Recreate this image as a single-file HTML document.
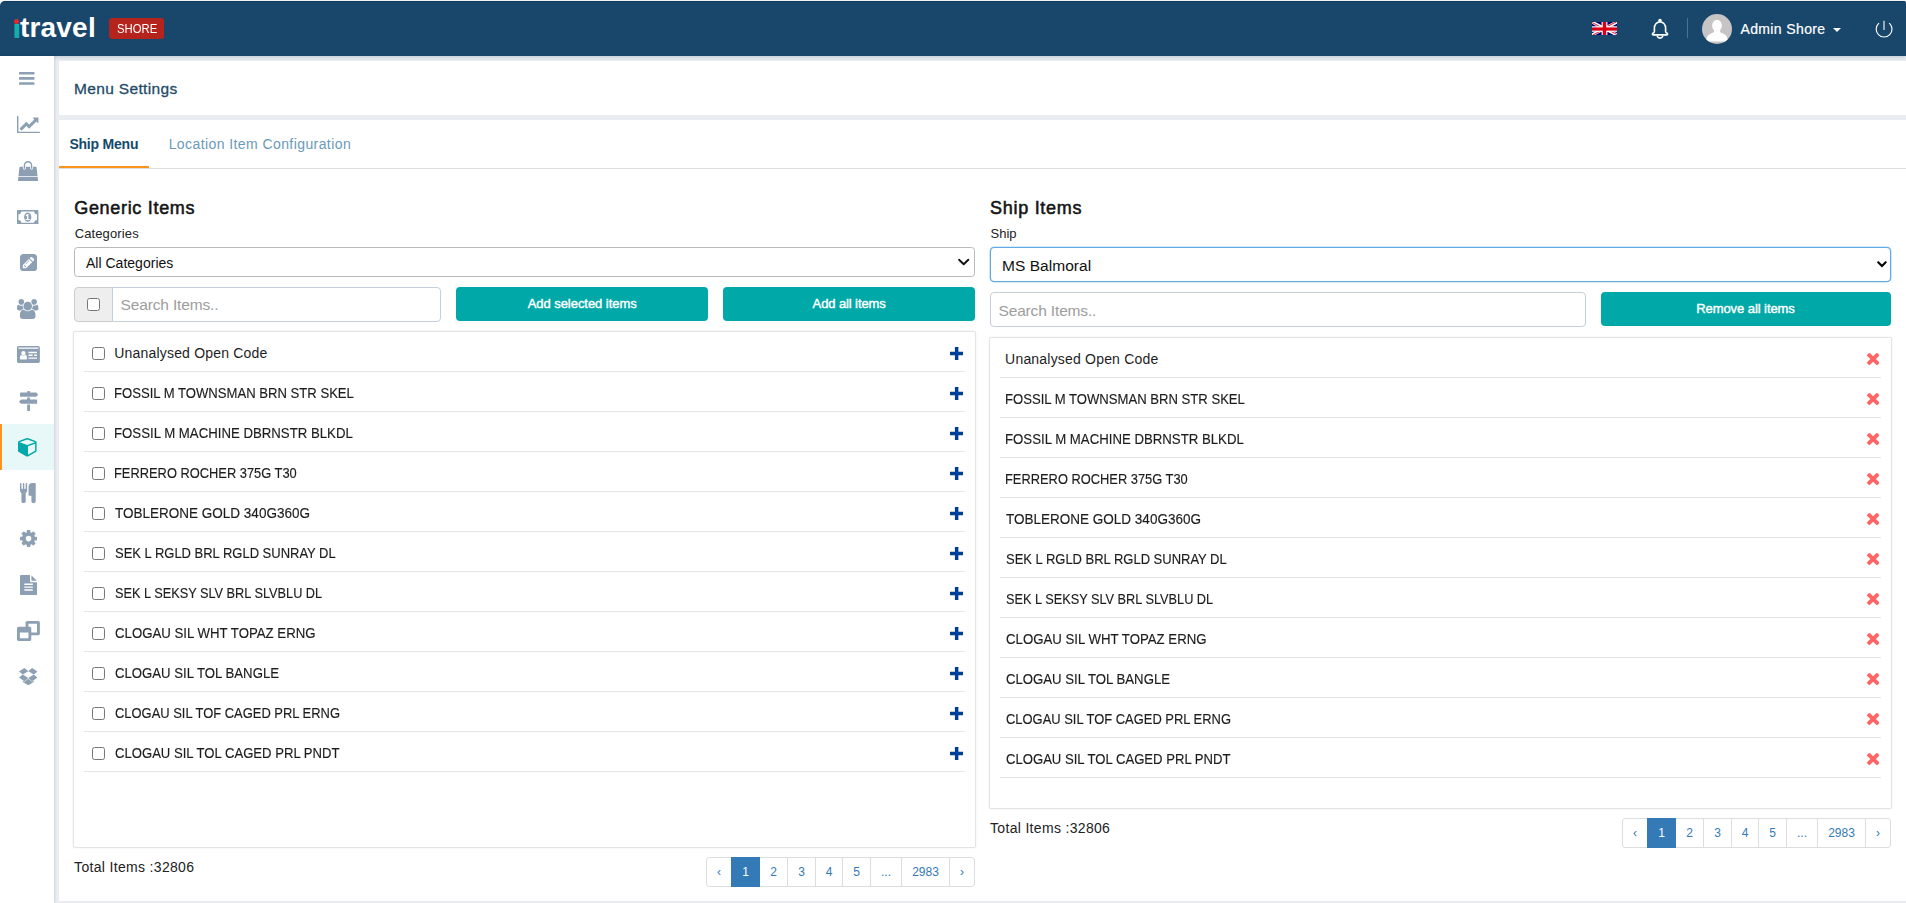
<!DOCTYPE html>
<html lang="en"><head><meta charset="utf-8"><title>Menu Settings</title>
<style>
html,body{margin:0;padding:0}
body{width:1906px;height:903px;position:relative;overflow:hidden;background:#e9edf2;font-family:"Liberation Sans",sans-serif}
body>*{box-sizing:border-box}
.t{position:absolute;white-space:pre;line-height:normal}
#topline{position:absolute;left:0;top:0;width:1906px;height:7px;background:#fdfdfc}
#hdr{position:absolute;left:0;top:1px;width:1906px;height:55px;background:#19476b;border-top:1px solid #0b3a63;border-radius:5px 2px 0 0;box-shadow:0 1px 4px rgba(60,80,100,.25)}
#logo-i{position:absolute;left:11.55px;top:14.5px;font-size:25.75px;font-weight:700;line-height:normal;transform:scaleX(1.36);transform-origin:0 0;color:transparent;background:linear-gradient(to bottom,transparent 0,transparent 8.7px,#10b3b0 8.7px,#17a5a2 100%);-webkit-background-clip:text;background-clip:text}
#logo-dot{position:absolute;left:13.8px;top:18.7px;width:5.5px;height:5.5px;border-radius:50%;background:#e1282d}
#badge{position:absolute;left:109px;top:18px;width:55px;height:21px;border-radius:3px;background:#b5241c}
#side{position:absolute;left:0;top:56px;width:54px;height:847px;background:#fff;box-shadow:1px 0 2px rgba(0,0,0,.1)}
#side-act{position:absolute;left:0;top:424px;width:54px;height:46px;background:#e8f7f8;border-left:2px solid #ff9320}
#card1{position:absolute;left:59px;top:61px;width:1847px;height:54px;background:#fff}
#card2{position:absolute;left:59px;top:120px;width:1847px;height:781px;background:#fff}
#tabline{position:absolute;left:59px;top:168px;width:1847px;height:1px;background:#ddd}
#tabact{position:absolute;left:59px;top:166px;width:90px;height:2px;background:#ff9320}
.sel{position:absolute;background:#fff;border:1px solid #b9b9b9;border-radius:3.5px}
.sel.foc{border:1px solid #62aae6;border-radius:4px;box-shadow:0 0 0 .3px #62aae6}
.addon{position:absolute;background:#eee;border:1px solid #ccc;border-radius:4px 0 0 4px}
.inp{position:absolute;background:#fff;border:1px solid #c3d0dc}
.btn{position:absolute;background:#00a9a8;border-radius:4px}
.lbox{position:absolute;background:#fff;border:1px solid #e4e4e4;border-radius:2px;box-shadow:0 0 2px rgba(0,0,0,.08)}
.sep{position:absolute;height:1px;background:#e6e6e6}
.pg{position:absolute;height:30px;font-size:12px;color:#337ab7}
.pg .c{position:absolute;top:0;height:30px;box-sizing:border-box;border:1px solid #ddd;background:#fff;text-align:center;line-height:28px}
.pg .c:first-child{border-radius:3px 0 0 3px}
.pg .c:last-child{border-radius:0 3px 3px 0}
.pg .c.act{background:#337ab7;border-color:#337ab7;color:#fff;z-index:2}
</style></head>
<body>
<div id="topline"></div><div id="hdr"></div>
<span id="logo-i">i</span><div id="logo-dot"></div>
<div id="badge"></div>
<svg style="position:absolute;left:1592px;top:22px" width="25" height="13" viewBox="0 0 60 30" preserveAspectRatio="none">
<defs><clipPath id="uj"><path d="M30,15 h30 v15 z v15 h-30 z h-30 v-15 z v-15 h30 z"/></clipPath></defs>
<rect width="60" height="30" fill="#00006e"/>
<path d="M0,0 L60,30 M60,0 L0,30" stroke="#fff" stroke-width="7"/>
<path d="M0,0 L60,30 M60,0 L0,30" clip-path="url(#uj)" stroke="#dc1a2c" stroke-width="4.4"/>
<path d="M30,0 v30" stroke="#fff" stroke-width="14"/><path d="M0,16.2 h60" stroke="#fff" stroke-width="12.8"/>
<path d="M30,0 v30" stroke="#d70015" stroke-width="8.4"/><path d="M0,16.2 h60" stroke="#d70015" stroke-width="7.4"/>
</svg>
<svg style="position:absolute;left:1648px;top:16px" width="24" height="26" viewBox="1648 16 24 26" fill="none" stroke="#fff" stroke-width="1.6" stroke-linejoin="round" stroke-linecap="round">
<path d="M1660,21.7 C1656.6,22.3 1654.4,24.9 1654.4,28.2 V31.4 C1654.4,32.3 1653.7,32.8 1653,33.2 C1652.1,33.7 1652.2,34.9 1653.2,34.9 H1666.8 C1667.8,34.9 1667.9,33.7 1667,33.2 C1666.3,32.8 1665.6,32.3 1665.6,31.4 V28.2 C1665.6,24.9 1663.4,22.3 1660,21.7 Z"/>
<path d="M1657.3,36.2 A2.8,2.6 0 0 0 1662.7,36.2"/>
<circle cx="1660" cy="20.5" r="1" fill="#fff"/></svg>
<div style="position:absolute;left:1687px;top:18px;width:1px;height:20px;background:#3f76a3"></div>
<svg style="position:absolute;left:1702px;top:13.7px" width="30" height="30" viewBox="0 0 30 30">
<defs><clipPath id="av"><circle cx="15" cy="15" r="15"/></clipPath></defs>
<circle cx="15" cy="15" r="15" fill="#c6c4c5"/>
<g clip-path="url(#av)" fill="#fff"><ellipse cx="15" cy="11.6" rx="4.9" ry="5.9"/>
<path d="M4.2,27 C4.2,21.5 8,19.6 11.6,18.6 L12.4,16 H17.6 L18.4,18.6 C22,19.6 25.8,21.5 25.8,27 V27.6 H4.2Z"/></g>
</svg>
<div style="position:absolute;left:1833px;top:27.7px;width:0;height:0;border-left:4px solid transparent;border-right:4px solid transparent;border-top:4.6px solid #fff"></div>
<svg style="position:absolute;left:1874px;top:19px" width="20" height="20" viewBox="0 0 20 20" fill="none" stroke="#fff" stroke-width="1.25" stroke-linecap="round">
<path d="M4.7,4.3 A7.9,7.9 0 1 0 15.5,4.3" stroke-width="1.15"/><path d="M10,1.8 V10.9" stroke-width="1.1" stroke-linecap="butt"/></svg>
<div id="side"></div>
<div id="side-act"></div>
<svg style="position:absolute;left:19px;top:72.2px;" width="15.5" height="12.8" viewBox="0 -1280 1536 1280" preserveAspectRatio="none"><path fill="#8c9fb3" transform="scale(1,-1)" d="M1536 192v-128q0 -26 -19 -45t-45 -19h-1408q-26 0 -45 19t-19 45v128q0 26 19 45t45 19h1408q26 0 45 -19t19 -45zM1536 704v-128q0 -26 -19 -45t-45 -19h-1408q-26 0 -45 19t-19 45v128q0 26 19 45t45 19h1408q26 0 45 -19t19 -45zM1536 1216v-128q0 -26 -19 -45 t-45 -19h-1408q-26 0 -45 19t-19 45v128q0 26 19 45t45 19h1408q26 0 45 -19t19 -45z"/></svg>
<svg style="position:absolute;left:16.67px;top:116.23px;" width="22.86" height="17.14" viewBox="0 -1408 2048 1536" preserveAspectRatio="none"><path fill="#8c9fb3" transform="scale(1,-1)" d="M2048 0v-128h-2048v1536h128v-1408h1920zM1920 1248v-435q0 -21 -19.5 -29.5t-35.5 7.5l-121 121l-633 -633q-10 -10 -23 -10t-23 10l-233 233l-416 -416l-192 192l585 585q10 10 23 10t23 -10l233 -233l464 464l-121 121q-16 16 -7.5 35.5t29.5 19.5h435q14 0 23 -9 t9 -23z"/></svg>
<svg style="position:absolute;left:18.1px;top:160.8px;" width="20.01" height="20.0" viewBox="-0.4090919494628906 -1536 1792.818115234375 1792" preserveAspectRatio="none"><path fill="#8c9fb3" transform="scale(1,-1)" d="M1757 128l35 -313q3 -28 -16 -50q-19 -21 -48 -21h-1664q-29 0 -48 21q-19 22 -16 50l35 313h1722zM1664 967l86 -775h-1708l86 775q3 24 21 40.5t43 16.5h256v-128q0 -53 37.5 -90.5t90.5 -37.5t90.5 37.5t37.5 90.5v128h384v-128q0 -53 37.5 -90.5t90.5 -37.5 t90.5 37.5t37.5 90.5v128h256q25 0 43 -16.5t21 -40.5zM1280 1152v-256q0 -26 -19 -45t-45 -19t-45 19t-19 45v256q0 106 -75 181t-181 75t-181 -75t-75 -181v-256q0 -26 -19 -45t-45 -19t-45 19t-19 45v256q0 159 112.5 271.5t271.5 112.5t271.5 -112.5t112.5 -271.5z"/></svg>
<svg style="position:absolute;left:17.39px;top:209.66px;" width="21.43" height="14.29" viewBox="0 -1280 1920 1280" preserveAspectRatio="none"><path fill="#8c9fb3" transform="scale(1,-1)" d="M768 384h384v96h-128v448h-114l-148 -137l77 -80q42 37 55 57h2v-288h-128v-96zM1280 640q0 -70 -21 -142t-59.5 -134t-101.5 -101t-138 -39t-138 39t-101.5 101t-59.5 134t-21 142t21 142t59.5 134t101.5 101t138 39t138 -39t101.5 -101t59.5 -134t21 -142zM1792 384 v512q-106 0 -181 75t-75 181h-1152q0 -106 -75 -181t-181 -75v-512q106 0 181 -75t75 -181h1152q0 106 75 181t181 75zM1920 1216v-1152q0 -26 -19 -45t-45 -19h-1792q-26 0 -45 19t-19 45v1152q0 26 19 45t45 19h1792q26 0 45 -19t19 -45z"/></svg>
<svg style="position:absolute;left:19.53px;top:254.23px;" width="17.14" height="17.14" viewBox="0 -1408 1536 1536" preserveAspectRatio="none"><path fill="#8c9fb3" transform="scale(1,-1)" d="M404 428l152 -152l-52 -52h-56v96h-96v56zM818 818q14 -13 -3 -30l-291 -291q-17 -17 -30 -3q-14 13 3 30l291 291q17 17 30 3zM544 128l544 544l-288 288l-544 -544v-288h288zM1152 736l92 92q28 28 28 68t-28 68l-152 152q-28 28 -68 28t-68 -28l-92 -92zM1536 1120 v-960q0 -119 -84.5 -203.5t-203.5 -84.5h-960q-119 0 -203.5 84.5t-84.5 203.5v960q0 119 84.5 203.5t203.5 84.5h960q119 0 203.5 -84.5t84.5 -203.5z"/></svg>
<svg style="position:absolute;left:17.39px;top:298.8px;" width="21.43" height="20.0" viewBox="0 -1536 1920 1792" preserveAspectRatio="none"><path fill="#8c9fb3" transform="scale(1,-1)" d="M593 640q-162 -5 -265 -128h-134q-82 0 -138 40.5t-56 118.5q0 353 124 353q6 0 43.5 -21t97.5 -42.5t119 -21.5q67 0 133 23q-5 -37 -5 -66q0 -139 81 -256zM1664 3q0 -120 -73 -189.5t-194 -69.5h-874q-121 0 -194 69.5t-73 189.5q0 53 3.5 103.5t14 109t26.5 108.5 t43 97.5t62 81t85.5 53.5t111.5 20q10 0 43 -21.5t73 -48t107 -48t135 -21.5t135 21.5t107 48t73 48t43 21.5q61 0 111.5 -20t85.5 -53.5t62 -81t43 -97.5t26.5 -108.5t14 -109t3.5 -103.5zM640 1280q0 -106 -75 -181t-181 -75t-181 75t-75 181t75 181t181 75t181 -75 t75 -181zM1344 896q0 -159 -112.5 -271.5t-271.5 -112.5t-271.5 112.5t-112.5 271.5t112.5 271.5t271.5 112.5t271.5 -112.5t112.5 -271.5zM1920 671q0 -78 -56 -118.5t-138 -40.5h-134q-103 123 -265 128q81 117 81 256q0 29 -5 66q66 -23 133 -23q59 0 119 21.5t97.5 42.5 t43.5 21q124 0 124 -353zM1792 1280q0 -106 -75 -181t-181 -75t-181 75t-75 181t75 181t181 75t181 -75t75 -181z"/></svg>
<svg style="position:absolute;left:16.67px;top:346.23px;" width="22.86" height="17.14" viewBox="0 -1408 2048 1536" preserveAspectRatio="none"><path fill="#8c9fb3" transform="scale(1,-1)" d="M896 324q0 54 -7.5 100.5t-24.5 90t-51 68.5t-81 25q-64 -64 -156 -64t-156 64q-47 0 -81 -25t-51 -68.5t-24.5 -90t-7.5 -100.5q0 -55 31.5 -93.5t75.5 -38.5h426q44 0 75.5 38.5t31.5 93.5zM768 768q0 80 -56 136t-136 56t-136 -56t-56 -136t56 -136t136 -56t136 56 t56 136zM1792 288v64q0 14 -9 23t-23 9h-704q-14 0 -23 -9t-9 -23v-64q0 -14 9 -23t23 -9h704q14 0 23 9t9 23zM1408 544v64q0 14 -9 23t-23 9h-320q-14 0 -23 -9t-9 -23v-64q0 -14 9 -23t23 -9h320q14 0 23 9t9 23zM1792 544v64q0 14 -9 23t-23 9h-192q-14 0 -23 -9t-9 -23 v-64q0 -14 9 -23t23 -9h192q14 0 23 9t9 23zM1792 800v64q0 14 -9 23t-23 9h-704q-14 0 -23 -9t-9 -23v-64q0 -14 9 -23t23 -9h704q14 0 23 9t9 23zM128 1152h1792v96q0 14 -9 23t-23 9h-1728q-14 0 -23 -9t-9 -23v-96zM2048 1248v-1216q0 -66 -47 -113t-113 -47h-1728 q-66 0 -113 47t-47 113v1216q0 66 47 113t113 47h1728q66 0 113 -47t47 -113z"/></svg>
<svg style="position:absolute;left:18.51px;top:390.8px;" width="19.17" height="20.0" viewBox="37 -1536 1718 1792" preserveAspectRatio="none"><path fill="#8c9fb3" transform="scale(1,-1)" d="M1745 1239q10 -10 10 -23t-10 -23l-141 -141q-28 -28 -68 -28h-1344q-26 0 -45 19t-19 45v256q0 26 19 45t45 19h576v64q0 26 19 45t45 19h128q26 0 45 -19t19 -45v-64h512q40 0 68 -28zM768 320h256v-512q0 -26 -19 -45t-45 -19h-128q-26 0 -45 19t-19 45v512zM1600 768 q26 0 45 -19t19 -45v-256q0 -26 -19 -45t-45 -19h-1344q-40 0 -68 28l-141 141q-10 10 -10 23t10 23l141 141q28 28 68 28h512v192h256v-192h576z"/></svg>
<svg style="position:absolute;left:18.1px;top:438.23px;" width="18.57" height="18.57" viewBox="0 -1408 1664 1664" preserveAspectRatio="none"><path fill="#00a9a8" transform="scale(1,-1)" d="M896 -93l640 349v636l-640 -233v-752zM832 772l698 254l-698 254l-698 -254zM1664 1024v-768q0 -35 -18 -65t-49 -47l-704 -384q-28 -16 -61 -16t-61 16l-704 384q-31 17 -49 47t-18 65v768q0 40 23 73t61 47l704 256q22 8 44 8t44 -8l704 -256q38 -14 61 -47t23 -73z "/></svg>
<svg style="position:absolute;left:20.24px;top:482.8px;" width="15.71" height="20.0" viewBox="0 -1536 1408 1792" preserveAspectRatio="none"><path fill="#8c9fb3" transform="scale(1,-1)" d="M640 1472v-640q0 -61 -35.5 -111t-92.5 -70v-779q0 -52 -38 -90t-90 -38h-128q-52 0 -90 38t-38 90v779q-57 20 -92.5 70t-35.5 111v640q0 26 19 45t45 19t45 -19t19 -45v-416q0 -26 19 -45t45 -19t45 19t19 45v416q0 26 19 45t45 19t45 -19t19 -45v-416q0 -26 19 -45 t45 -19t45 19t19 45v416q0 26 19 45t45 19t45 -19t19 -45zM1408 1472v-1600q0 -52 -38 -90t-90 -38h-128q-52 0 -90 38t-38 90v512h-224q-13 0 -22.5 9.5t-9.5 22.5v800q0 132 94 226t226 94h256q26 0 45 -19t19 -45z"/></svg>
<svg style="position:absolute;left:19.53px;top:530.23px;" width="17.14" height="17.14" viewBox="0 -1408 1536 1536" preserveAspectRatio="none"><path fill="#8c9fb3" transform="scale(1,-1)" d="M1024 640q0 106 -75 181t-181 75t-181 -75t-75 -181t75 -181t181 -75t181 75t75 181zM1536 749v-222q0 -12 -8 -23t-20 -13l-185 -28q-19 -54 -39 -91q35 -50 107 -138q10 -12 10 -25t-9 -23q-27 -37 -99 -108t-94 -71q-12 0 -26 9l-138 108q-44 -23 -91 -38 q-16 -136 -29 -186q-7 -28 -36 -28h-222q-14 0 -24.5 8.5t-11.5 21.5l-28 184q-49 16 -90 37l-141 -107q-10 -9 -25 -9q-14 0 -25 11q-126 114 -165 168q-7 10 -7 23q0 12 8 23q15 21 51 66.5t54 70.5q-27 50 -41 99l-183 27q-13 2 -21 12.5t-8 23.5v222q0 12 8 23t19 13 l186 28q14 46 39 92q-40 57 -107 138q-10 12 -10 24q0 10 9 23q26 36 98.5 107.5t94.5 71.5q13 0 26 -10l138 -107q44 23 91 38q16 136 29 186q7 28 36 28h222q14 0 24.5 -8.5t11.5 -21.5l28 -184q49 -16 90 -37l142 107q9 9 24 9q13 0 25 -10q129 -119 165 -170q7 -8 7 -22 q0 -12 -8 -23q-15 -21 -51 -66.5t-54 -70.5q26 -50 41 -98l183 -28q13 -2 21 -12.5t8 -23.5z"/></svg>
<svg style="position:absolute;left:19.53px;top:574.8px;" width="17.14" height="20.0" viewBox="0 -1536 1536 1792" preserveAspectRatio="none"><path fill="#8c9fb3" transform="scale(1,-1)" d="M1468 1060q14 -14 28 -36h-472v472q22 -14 36 -28zM992 896h544v-1056q0 -40 -28 -68t-68 -28h-1344q-40 0 -68 28t-28 68v1600q0 40 28 68t68 28h800v-544q0 -40 28 -68t68 -28zM1152 160v64q0 14 -9 23t-23 9h-704q-14 0 -23 -9t-9 -23v-64q0 -14 9 -23t23 -9h704 q14 0 23 9t9 23zM1152 416v64q0 14 -9 23t-23 9h-704q-14 0 -23 -9t-9 -23v-64q0 -14 9 -23t23 -9h704q14 0 23 9t9 23zM1152 672v64q0 14 -9 23t-23 9h-704q-14 0 -23 -9t-9 -23v-64q0 -14 9 -23t23 -9h704q14 0 23 9t9 23z"/></svg>
<svg style="position:absolute;left:16.67px;top:620.8px;" width="22.86" height="20.0" viewBox="0 -1536 2048 1792" preserveAspectRatio="none"><path fill="#8c9fb3" transform="scale(1,-1)" d="M256 0h768v512h-768v-512zM1280 512h512v768h-768v-256h96q66 0 113 -47t47 -113v-352zM2048 1376v-960q0 -66 -47 -113t-113 -47h-608v-352q0 -66 -47 -113t-113 -47h-960q-66 0 -113 47t-47 113v960q0 66 47 113t113 47h608v352q0 66 47 113t113 47h960q66 0 113 -47 t47 -113z"/></svg>
<svg style="position:absolute;left:18.81px;top:668.12px;" width="18.57" height="17.25" viewBox="64 -1418 1664 1546" preserveAspectRatio="none"><path fill="#8c9fb3" transform="scale(1,-1)" d="M402 829l494 -305l-342 -285l-490 319zM1388 274v-108l-490 -293v-1l-1 1l-1 -1v1l-489 293v108l147 -96l342 284v2l1 -1l1 1v-2l343 -284zM554 1418l342 -285l-494 -304l-338 270zM1390 829l338 -271l-489 -319l-343 285zM1239 1418l489 -319l-338 -270l-494 304z"/></svg>
<div id="card1"></div>
<div id="card2"></div>
<div id="tabline"></div><div id="tabact"></div>
<div class="sel" style="left:74px;top:247px;width:901px;height:30px"></div>
<svg style="position:absolute;left:956px;top:256px" width="16" height="12" viewBox="956 256 16 12" fill="none" stroke="#111" stroke-width="1.9" stroke-linecap="round" stroke-linejoin="round"><path d="M959.1,259.7 L963.7,264.2 L968.3,259.7"/></svg>
<div class="addon" style="left:74px;top:287px;width:39px;height:35px"></div>
<input type="checkbox" style="position:absolute;left:87px;top:298px;margin:0;width:13px;height:13px">
<div class="inp" style="left:112px;top:287px;width:329px;height:35px;border-radius:0 4px 4px 0"></div>
<div class="btn" style="left:456px;top:287px;width:252px;height:34px"></div>
<div class="btn" style="left:723px;top:287px;width:252px;height:34px"></div>
<div class="lbox" style="left:73px;top:331px;width:903px;height:517px"></div>
<div class="lbox" style="left:989px;top:337px;width:903px;height:472px"></div>
<div class="sep" style="left:84px;top:371px;width:881px"></div>
<input type="checkbox" style="position:absolute;left:92px;top:347px;margin:0;width:13px;height:13px">
<svg style="position:absolute;left:949.9px;top:347px" width="13.3" height="13" viewBox="0 0 13.3 13"><path fill="#003f98" d="M4.9,0h3.5v4.75h4.9v3.5h-4.9v4.75h-3.5v-4.75h-4.9v-3.5h4.9z"/></svg>
<div class="sep" style="left:1000px;top:377px;width:881px"></div>
<svg style="position:absolute;left:1866.8px;top:353px;" width="12.3" height="12.1" viewBox="110 -1170 1188 1188" preserveAspectRatio="none"><path fill="#ff6565" transform="scale(1,-1)" d="M1298 214q0 -40 -28 -68l-136 -136q-28 -28 -68 -28t-68 28l-294 294l-294 -294q-28 -28 -68 -28t-68 28l-136 136q-28 28 -28 68t28 68l294 294l-294 294q-28 28 -28 68t28 68l136 136q28 28 68 28t68 -28l294 -294l294 294q28 28 68 28t68 -28l136 -136q28 -28 28 -68 t-28 -68l-294 -294l294 -294q28 -28 28 -68z"/></svg>
<div class="sep" style="left:84px;top:411px;width:881px"></div>
<input type="checkbox" style="position:absolute;left:92px;top:387px;margin:0;width:13px;height:13px">
<svg style="position:absolute;left:949.9px;top:387px" width="13.3" height="13" viewBox="0 0 13.3 13"><path fill="#003f98" d="M4.9,0h3.5v4.75h4.9v3.5h-4.9v4.75h-3.5v-4.75h-4.9v-3.5h4.9z"/></svg>
<div class="sep" style="left:1000px;top:417px;width:881px"></div>
<svg style="position:absolute;left:1866.8px;top:393px;" width="12.3" height="12.1" viewBox="110 -1170 1188 1188" preserveAspectRatio="none"><path fill="#ff6565" transform="scale(1,-1)" d="M1298 214q0 -40 -28 -68l-136 -136q-28 -28 -68 -28t-68 28l-294 294l-294 -294q-28 -28 -68 -28t-68 28l-136 136q-28 28 -28 68t28 68l294 294l-294 294q-28 28 -28 68t28 68l136 136q28 28 68 28t68 -28l294 -294l294 294q28 28 68 28t68 -28l136 -136q28 -28 28 -68 t-28 -68l-294 -294l294 -294q28 -28 28 -68z"/></svg>
<div class="sep" style="left:84px;top:451px;width:881px"></div>
<input type="checkbox" style="position:absolute;left:92px;top:427px;margin:0;width:13px;height:13px">
<svg style="position:absolute;left:949.9px;top:427px" width="13.3" height="13" viewBox="0 0 13.3 13"><path fill="#003f98" d="M4.9,0h3.5v4.75h4.9v3.5h-4.9v4.75h-3.5v-4.75h-4.9v-3.5h4.9z"/></svg>
<div class="sep" style="left:1000px;top:457px;width:881px"></div>
<svg style="position:absolute;left:1866.8px;top:433px;" width="12.3" height="12.1" viewBox="110 -1170 1188 1188" preserveAspectRatio="none"><path fill="#ff6565" transform="scale(1,-1)" d="M1298 214q0 -40 -28 -68l-136 -136q-28 -28 -68 -28t-68 28l-294 294l-294 -294q-28 -28 -68 -28t-68 28l-136 136q-28 28 -28 68t28 68l294 294l-294 294q-28 28 -28 68t28 68l136 136q28 28 68 28t68 -28l294 -294l294 294q28 28 68 28t68 -28l136 -136q28 -28 28 -68 t-28 -68l-294 -294l294 -294q28 -28 28 -68z"/></svg>
<div class="sep" style="left:84px;top:491px;width:881px"></div>
<input type="checkbox" style="position:absolute;left:92px;top:467px;margin:0;width:13px;height:13px">
<svg style="position:absolute;left:949.9px;top:467px" width="13.3" height="13" viewBox="0 0 13.3 13"><path fill="#003f98" d="M4.9,0h3.5v4.75h4.9v3.5h-4.9v4.75h-3.5v-4.75h-4.9v-3.5h4.9z"/></svg>
<div class="sep" style="left:1000px;top:497px;width:881px"></div>
<svg style="position:absolute;left:1866.8px;top:473px;" width="12.3" height="12.1" viewBox="110 -1170 1188 1188" preserveAspectRatio="none"><path fill="#ff6565" transform="scale(1,-1)" d="M1298 214q0 -40 -28 -68l-136 -136q-28 -28 -68 -28t-68 28l-294 294l-294 -294q-28 -28 -68 -28t-68 28l-136 136q-28 28 -28 68t28 68l294 294l-294 294q-28 28 -28 68t28 68l136 136q28 28 68 28t68 -28l294 -294l294 294q28 28 68 28t68 -28l136 -136q28 -28 28 -68 t-28 -68l-294 -294l294 -294q28 -28 28 -68z"/></svg>
<div class="sep" style="left:84px;top:531px;width:881px"></div>
<input type="checkbox" style="position:absolute;left:92px;top:507px;margin:0;width:13px;height:13px">
<svg style="position:absolute;left:949.9px;top:507px" width="13.3" height="13" viewBox="0 0 13.3 13"><path fill="#003f98" d="M4.9,0h3.5v4.75h4.9v3.5h-4.9v4.75h-3.5v-4.75h-4.9v-3.5h4.9z"/></svg>
<div class="sep" style="left:1000px;top:537px;width:881px"></div>
<svg style="position:absolute;left:1866.8px;top:513px;" width="12.3" height="12.1" viewBox="110 -1170 1188 1188" preserveAspectRatio="none"><path fill="#ff6565" transform="scale(1,-1)" d="M1298 214q0 -40 -28 -68l-136 -136q-28 -28 -68 -28t-68 28l-294 294l-294 -294q-28 -28 -68 -28t-68 28l-136 136q-28 28 -28 68t28 68l294 294l-294 294q-28 28 -28 68t28 68l136 136q28 28 68 28t68 -28l294 -294l294 294q28 28 68 28t68 -28l136 -136q28 -28 28 -68 t-28 -68l-294 -294l294 -294q28 -28 28 -68z"/></svg>
<div class="sep" style="left:84px;top:571px;width:881px"></div>
<input type="checkbox" style="position:absolute;left:92px;top:547px;margin:0;width:13px;height:13px">
<svg style="position:absolute;left:949.9px;top:547px" width="13.3" height="13" viewBox="0 0 13.3 13"><path fill="#003f98" d="M4.9,0h3.5v4.75h4.9v3.5h-4.9v4.75h-3.5v-4.75h-4.9v-3.5h4.9z"/></svg>
<div class="sep" style="left:1000px;top:577px;width:881px"></div>
<svg style="position:absolute;left:1866.8px;top:553px;" width="12.3" height="12.1" viewBox="110 -1170 1188 1188" preserveAspectRatio="none"><path fill="#ff6565" transform="scale(1,-1)" d="M1298 214q0 -40 -28 -68l-136 -136q-28 -28 -68 -28t-68 28l-294 294l-294 -294q-28 -28 -68 -28t-68 28l-136 136q-28 28 -28 68t28 68l294 294l-294 294q-28 28 -28 68t28 68l136 136q28 28 68 28t68 -28l294 -294l294 294q28 28 68 28t68 -28l136 -136q28 -28 28 -68 t-28 -68l-294 -294l294 -294q28 -28 28 -68z"/></svg>
<div class="sep" style="left:84px;top:611px;width:881px"></div>
<input type="checkbox" style="position:absolute;left:92px;top:587px;margin:0;width:13px;height:13px">
<svg style="position:absolute;left:949.9px;top:587px" width="13.3" height="13" viewBox="0 0 13.3 13"><path fill="#003f98" d="M4.9,0h3.5v4.75h4.9v3.5h-4.9v4.75h-3.5v-4.75h-4.9v-3.5h4.9z"/></svg>
<div class="sep" style="left:1000px;top:617px;width:881px"></div>
<svg style="position:absolute;left:1866.8px;top:593px;" width="12.3" height="12.1" viewBox="110 -1170 1188 1188" preserveAspectRatio="none"><path fill="#ff6565" transform="scale(1,-1)" d="M1298 214q0 -40 -28 -68l-136 -136q-28 -28 -68 -28t-68 28l-294 294l-294 -294q-28 -28 -68 -28t-68 28l-136 136q-28 28 -28 68t28 68l294 294l-294 294q-28 28 -28 68t28 68l136 136q28 28 68 28t68 -28l294 -294l294 294q28 28 68 28t68 -28l136 -136q28 -28 28 -68 t-28 -68l-294 -294l294 -294q28 -28 28 -68z"/></svg>
<div class="sep" style="left:84px;top:651px;width:881px"></div>
<input type="checkbox" style="position:absolute;left:92px;top:627px;margin:0;width:13px;height:13px">
<svg style="position:absolute;left:949.9px;top:627px" width="13.3" height="13" viewBox="0 0 13.3 13"><path fill="#003f98" d="M4.9,0h3.5v4.75h4.9v3.5h-4.9v4.75h-3.5v-4.75h-4.9v-3.5h4.9z"/></svg>
<div class="sep" style="left:1000px;top:657px;width:881px"></div>
<svg style="position:absolute;left:1866.8px;top:633px;" width="12.3" height="12.1" viewBox="110 -1170 1188 1188" preserveAspectRatio="none"><path fill="#ff6565" transform="scale(1,-1)" d="M1298 214q0 -40 -28 -68l-136 -136q-28 -28 -68 -28t-68 28l-294 294l-294 -294q-28 -28 -68 -28t-68 28l-136 136q-28 28 -28 68t28 68l294 294l-294 294q-28 28 -28 68t28 68l136 136q28 28 68 28t68 -28l294 -294l294 294q28 28 68 28t68 -28l136 -136q28 -28 28 -68 t-28 -68l-294 -294l294 -294q28 -28 28 -68z"/></svg>
<div class="sep" style="left:84px;top:691px;width:881px"></div>
<input type="checkbox" style="position:absolute;left:92px;top:667px;margin:0;width:13px;height:13px">
<svg style="position:absolute;left:949.9px;top:667px" width="13.3" height="13" viewBox="0 0 13.3 13"><path fill="#003f98" d="M4.9,0h3.5v4.75h4.9v3.5h-4.9v4.75h-3.5v-4.75h-4.9v-3.5h4.9z"/></svg>
<div class="sep" style="left:1000px;top:697px;width:881px"></div>
<svg style="position:absolute;left:1866.8px;top:673px;" width="12.3" height="12.1" viewBox="110 -1170 1188 1188" preserveAspectRatio="none"><path fill="#ff6565" transform="scale(1,-1)" d="M1298 214q0 -40 -28 -68l-136 -136q-28 -28 -68 -28t-68 28l-294 294l-294 -294q-28 -28 -68 -28t-68 28l-136 136q-28 28 -28 68t28 68l294 294l-294 294q-28 28 -28 68t28 68l136 136q28 28 68 28t68 -28l294 -294l294 294q28 28 68 28t68 -28l136 -136q28 -28 28 -68 t-28 -68l-294 -294l294 -294q28 -28 28 -68z"/></svg>
<div class="sep" style="left:84px;top:731px;width:881px"></div>
<input type="checkbox" style="position:absolute;left:92px;top:707px;margin:0;width:13px;height:13px">
<svg style="position:absolute;left:949.9px;top:707px" width="13.3" height="13" viewBox="0 0 13.3 13"><path fill="#003f98" d="M4.9,0h3.5v4.75h4.9v3.5h-4.9v4.75h-3.5v-4.75h-4.9v-3.5h4.9z"/></svg>
<div class="sep" style="left:1000px;top:737px;width:881px"></div>
<svg style="position:absolute;left:1866.8px;top:713px;" width="12.3" height="12.1" viewBox="110 -1170 1188 1188" preserveAspectRatio="none"><path fill="#ff6565" transform="scale(1,-1)" d="M1298 214q0 -40 -28 -68l-136 -136q-28 -28 -68 -28t-68 28l-294 294l-294 -294q-28 -28 -68 -28t-68 28l-136 136q-28 28 -28 68t28 68l294 294l-294 294q-28 28 -28 68t28 68l136 136q28 28 68 28t68 -28l294 -294l294 294q28 28 68 28t68 -28l136 -136q28 -28 28 -68 t-28 -68l-294 -294l294 -294q28 -28 28 -68z"/></svg>
<div class="sep" style="left:84px;top:771px;width:881px"></div>
<input type="checkbox" style="position:absolute;left:92px;top:747px;margin:0;width:13px;height:13px">
<svg style="position:absolute;left:949.9px;top:747px" width="13.3" height="13" viewBox="0 0 13.3 13"><path fill="#003f98" d="M4.9,0h3.5v4.75h4.9v3.5h-4.9v4.75h-3.5v-4.75h-4.9v-3.5h4.9z"/></svg>
<div class="sep" style="left:1000px;top:777px;width:881px"></div>
<svg style="position:absolute;left:1866.8px;top:753px;" width="12.3" height="12.1" viewBox="110 -1170 1188 1188" preserveAspectRatio="none"><path fill="#ff6565" transform="scale(1,-1)" d="M1298 214q0 -40 -28 -68l-136 -136q-28 -28 -68 -28t-68 28l-294 294l-294 -294q-28 -28 -68 -28t-68 28l-136 136q-28 28 -28 68t28 68l294 294l-294 294q-28 28 -28 68t28 68l136 136q28 28 68 28t68 -28l294 -294l294 294q28 28 68 28t68 -28l136 -136q28 -28 28 -68 t-28 -68l-294 -294l294 -294q28 -28 28 -68z"/></svg>
<div class="pg" style="left:706px;top:857px"><div class="c" style="left:0px;width:26px">‹</div><div class="c act" style="left:25px;width:29px">1</div><div class="c" style="left:53px;width:29px">2</div><div class="c" style="left:81px;width:29px">3</div><div class="c" style="left:109px;width:28px">4</div><div class="c" style="left:136px;width:29px">5</div><div class="c" style="left:164px;width:32px">...</div><div class="c" style="left:195px;width:49px">2983</div><div class="c" style="left:243px;width:26px">›</div></div>
<div class="pg" style="left:1622px;top:818px"><div class="c" style="left:0px;width:26px">‹</div><div class="c act" style="left:25px;width:29px">1</div><div class="c" style="left:53px;width:29px">2</div><div class="c" style="left:81px;width:29px">3</div><div class="c" style="left:109px;width:28px">4</div><div class="c" style="left:136px;width:29px">5</div><div class="c" style="left:164px;width:32px">...</div><div class="c" style="left:195px;width:49px">2983</div><div class="c" style="left:243px;width:26px">›</div></div>
<div class="sel foc" style="left:990px;top:247px;width:901px;height:35px"></div>
<svg style="position:absolute;left:1872px;top:258px" width="16" height="12" viewBox="1872 258 16 12" fill="none" stroke="#000" stroke-width="2.1" stroke-linecap="round" stroke-linejoin="miter"><path d="M1878.2,262.3 L1881.95,266.0 L1885.7,262.3"/></svg>
<div class="inp" style="left:990px;top:292px;width:596px;height:35px;border-radius:4px"></div>
<div class="btn" style="left:1601px;top:292px;width:290px;height:34px"></div>
<span class="t" style="left:19.96px;top:12.21px;font-size:28px;font-weight:700;color:#fff;letter-spacing:0.0px;letter-spacing:.2px;">travel</span>
<span class="t" style="left:116.89px;top:21.33px;font-size:13px;font-weight:400;color:#fff;transform:scaleX(0.8695);transform-origin:0 0;">SHORE</span>
<span class="t" style="left:1740.47px;top:20.91px;font-size:14px;font-weight:400;color:#fff;letter-spacing:0.372px;-webkit-text-stroke:.2px #fff;">Admin Shore</span>
<span class="t" style="left:74.03px;top:79.62px;font-size:15.5px;font-weight:400;color:#234a69;letter-spacing:0.337px;-webkit-text-stroke:.3px #234a69;">Menu Settings</span>
<span class="t" style="left:69.4px;top:136.21px;font-size:14px;font-weight:700;color:#124a6d;letter-spacing:-0.206px;">Ship Menu</span>
<span class="t" style="left:168.65px;top:136.21px;font-size:14px;font-weight:400;color:#6a9ab9;letter-spacing:0.417px;">Location Item Configuration</span>
<span class="t" style="left:74.19px;top:198.12px;font-size:18px;font-weight:400;color:#151515;letter-spacing:0.693px;-webkit-text-stroke:.55px #151515;">Generic Items</span>
<span class="t" style="left:74.64px;top:226.03px;font-size:13px;font-weight:400;color:#222;letter-spacing:0.132px;">Categories</span>
<span class="t" style="left:85.97px;top:254.71px;font-size:14px;font-weight:400;color:#111;letter-spacing:0.014px;">All Categories</span>
<span class="t" style="left:120.6px;top:296.22px;font-size:15.5px;font-weight:400;color:#9d9d9d;letter-spacing:-0.154px;">Search Items..</span>
<span class="t" style="left:527.67px;top:296.03px;font-size:13px;font-weight:400;color:#fff;letter-spacing:-0.043px;-webkit-text-stroke:.4px #fff;">Add selected items</span>
<span class="t" style="left:812.57px;top:296.03px;font-size:13px;font-weight:400;color:#fff;letter-spacing:-0.102px;-webkit-text-stroke:.4px #fff;">Add all items</span>
<span class="t" style="left:114.22px;top:345.21px;font-size:14px;font-weight:400;color:#1d1d1d;letter-spacing:0.194px;">Unanalysed Open Code</span>
<span class="t" style="left:1005.12px;top:350.91px;font-size:14px;font-weight:400;color:#1d1d1d;letter-spacing:0.194px;">Unanalysed Open Code</span>
<span class="t" style="left:114.23px;top:385.21px;font-size:14px;font-weight:400;color:#1d1d1d;transform:scaleX(0.9354);transform-origin:0 0;-webkit-text-stroke:.15px #1d1d1d;">FOSSIL M TOWNSMAN BRN STR SKEL</span>
<span class="t" style="left:1005.13px;top:390.91px;font-size:14px;font-weight:400;color:#1d1d1d;transform:scaleX(0.9354);transform-origin:0 0;-webkit-text-stroke:.15px #1d1d1d;">FOSSIL M TOWNSMAN BRN STR SKEL</span>
<span class="t" style="left:114.22px;top:425.21px;font-size:14px;font-weight:400;color:#1d1d1d;transform:scaleX(0.9435);transform-origin:0 0;-webkit-text-stroke:.15px #1d1d1d;">FOSSIL M MACHINE DBRNSTR BLKDL</span>
<span class="t" style="left:1005.12px;top:430.91px;font-size:14px;font-weight:400;color:#1d1d1d;transform:scaleX(0.9435);transform-origin:0 0;-webkit-text-stroke:.15px #1d1d1d;">FOSSIL M MACHINE DBRNSTR BLKDL</span>
<span class="t" style="left:114.24px;top:465.21px;font-size:14px;font-weight:400;color:#1d1d1d;transform:scaleX(0.9189);transform-origin:0 0;-webkit-text-stroke:.15px #1d1d1d;">FERRERO ROCHER 375G T30</span>
<span class="t" style="left:1005.14px;top:470.91px;font-size:14px;font-weight:400;color:#1d1d1d;transform:scaleX(0.9189);transform-origin:0 0;-webkit-text-stroke:.15px #1d1d1d;">FERRERO ROCHER 375G T30</span>
<span class="t" style="left:115.0px;top:505.21px;font-size:14px;font-weight:400;color:#1d1d1d;transform:scaleX(0.9648);transform-origin:0 0;-webkit-text-stroke:.15px #1d1d1d;">TOBLERONE GOLD 340G360G</span>
<span class="t" style="left:1005.9px;top:510.91px;font-size:14px;font-weight:400;color:#1d1d1d;transform:scaleX(0.9648);transform-origin:0 0;-webkit-text-stroke:.15px #1d1d1d;">TOBLERONE GOLD 340G360G</span>
<span class="t" style="left:114.71px;top:545.21px;font-size:14px;font-weight:400;color:#1d1d1d;transform:scaleX(0.9270);transform-origin:0 0;-webkit-text-stroke:.15px #1d1d1d;">SEK L RGLD BRL RGLD SUNRAY DL</span>
<span class="t" style="left:1005.61px;top:550.91px;font-size:14px;font-weight:400;color:#1d1d1d;transform:scaleX(0.9270);transform-origin:0 0;-webkit-text-stroke:.15px #1d1d1d;">SEK L RGLD BRL RGLD SUNRAY DL</span>
<span class="t" style="left:114.72px;top:585.21px;font-size:14px;font-weight:400;color:#1d1d1d;transform:scaleX(0.9095);transform-origin:0 0;-webkit-text-stroke:.15px #1d1d1d;">SEK L SEKSY SLV BRL SLVBLU DL</span>
<span class="t" style="left:1005.62px;top:590.91px;font-size:14px;font-weight:400;color:#1d1d1d;transform:scaleX(0.9095);transform-origin:0 0;-webkit-text-stroke:.15px #1d1d1d;">SEK L SEKSY SLV BRL SLVBLU DL</span>
<span class="t" style="left:114.63px;top:625.21px;font-size:14px;font-weight:400;color:#1d1d1d;transform:scaleX(0.9441);transform-origin:0 0;-webkit-text-stroke:.15px #1d1d1d;">CLOGAU SIL WHT TOPAZ ERNG</span>
<span class="t" style="left:1005.53px;top:630.91px;font-size:14px;font-weight:400;color:#1d1d1d;transform:scaleX(0.9441);transform-origin:0 0;-webkit-text-stroke:.15px #1d1d1d;">CLOGAU SIL WHT TOPAZ ERNG</span>
<span class="t" style="left:114.63px;top:665.21px;font-size:14px;font-weight:400;color:#1d1d1d;transform:scaleX(0.9409);transform-origin:0 0;-webkit-text-stroke:.15px #1d1d1d;">CLOGAU SIL TOL BANGLE</span>
<span class="t" style="left:1005.53px;top:670.91px;font-size:14px;font-weight:400;color:#1d1d1d;transform:scaleX(0.9409);transform-origin:0 0;-webkit-text-stroke:.15px #1d1d1d;">CLOGAU SIL TOL BANGLE</span>
<span class="t" style="left:114.64px;top:705.21px;font-size:14px;font-weight:400;color:#1d1d1d;transform:scaleX(0.9240);transform-origin:0 0;-webkit-text-stroke:.15px #1d1d1d;">CLOGAU SIL TOF CAGED PRL ERNG</span>
<span class="t" style="left:1005.54px;top:710.91px;font-size:14px;font-weight:400;color:#1d1d1d;transform:scaleX(0.9240);transform-origin:0 0;-webkit-text-stroke:.15px #1d1d1d;">CLOGAU SIL TOF CAGED PRL ERNG</span>
<span class="t" style="left:114.63px;top:745.21px;font-size:14px;font-weight:400;color:#1d1d1d;transform:scaleX(0.9359);transform-origin:0 0;-webkit-text-stroke:.15px #1d1d1d;">CLOGAU SIL TOL CAGED PRL PNDT</span>
<span class="t" style="left:1005.53px;top:750.91px;font-size:14px;font-weight:400;color:#1d1d1d;transform:scaleX(0.9359);transform-origin:0 0;-webkit-text-stroke:.15px #1d1d1d;">CLOGAU SIL TOL CAGED PRL PNDT</span>
<span class="t" style="left:74.09px;top:859.41px;font-size:14px;font-weight:400;color:#222;letter-spacing:0.325px;">Total Items :32806</span>
<span class="t" style="left:990.08px;top:198.22px;font-size:18px;font-weight:400;color:#151515;letter-spacing:0.704px;-webkit-text-stroke:.55px #151515;">Ship Items</span>
<span class="t" style="left:990.51px;top:226.03px;font-size:13px;font-weight:400;color:#222;letter-spacing:0.019px;">Ship</span>
<span class="t" style="left:1002.03px;top:256.92px;font-size:15.5px;font-weight:400;color:#111;letter-spacing:0.039px;">MS Balmoral</span>
<span class="t" style="left:998.5px;top:301.92px;font-size:15.5px;font-weight:400;color:#9d9d9d;letter-spacing:-0.154px;">Search Items..</span>
<span class="t" style="left:1696.23px;top:301.13px;font-size:13px;font-weight:400;color:#fff;letter-spacing:-0.071px;-webkit-text-stroke:.4px #fff;">Remove all items</span>
<span class="t" style="left:989.99px;top:820.41px;font-size:14px;font-weight:400;color:#222;letter-spacing:0.325px;">Total Items :32806</span>
</body></html>
